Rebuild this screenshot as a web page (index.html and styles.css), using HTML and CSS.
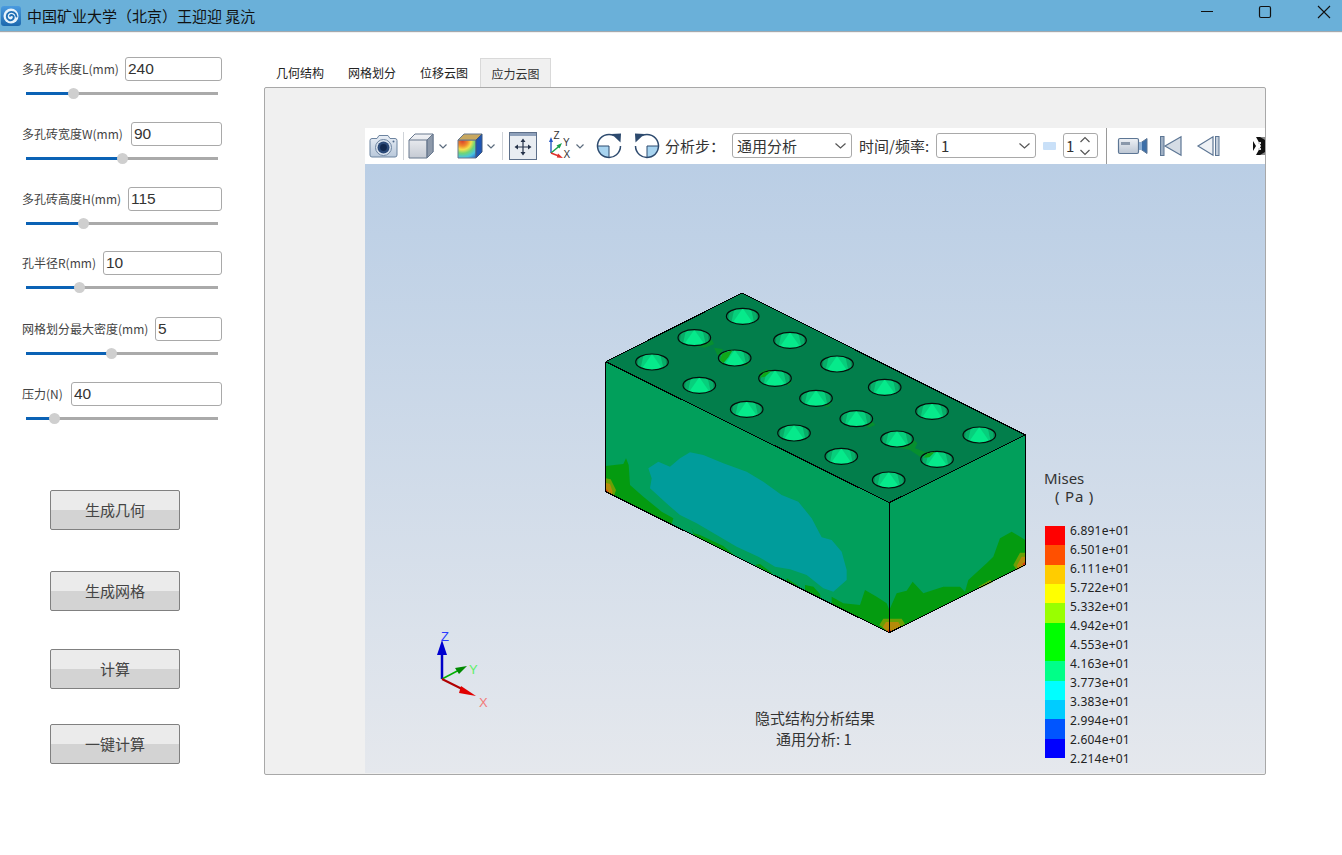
FILE: index.html
```html
<!DOCTYPE html>
<html lang="zh-CN">
<head>
<meta charset="utf-8">
<title>中国矿业大学（北京）王迎迎 晁沆</title>
<link rel="stylesheet" href="styles.css">
</head>
<body>
<div class="app">
  <header class="titlebar">
    <svg class="app-icon" viewBox="0 0 20 20" width="20" height="20">
      <defs><linearGradient id="appg" x1="0" y1="0" x2="0" y2="1"><stop offset="0" stop-color="#4a9be0"/><stop offset="1" stop-color="#1c68ae"/></linearGradient></defs>
      <rect x="0" y="0" width="20" height="20" rx="3" fill="url(#appg)"/>
      <circle cx="10" cy="10" r="7.5" fill="#e8f3fb"/>
      <path d="M15.5 10.5C15 6.5 11 5 8 6.5C5 8.2 5 12.5 8 14C10.5 15 13 13.5 12.8 11C12.5 9 10.2 8.5 9 9.8" fill="none" stroke="#1f6fb4" stroke-width="1.9" stroke-linecap="round"/>
    </svg>
    <span class="app-title">中国矿业大学（北京）王迎迎 晁沆</span>
    <div class="win-controls">
      <svg class="win-btn" viewBox="0 0 14 14" width="14" height="14"><path d="M2 6.5H14" stroke="#111" stroke-width="1" fill="none"/></svg>
      <svg class="win-btn" viewBox="0 0 14 14" width="14" height="14"><rect x="1.5" y="1.5" width="11" height="11" rx="1.5" stroke="#111" stroke-width="1.2" fill="none"/></svg>
      <svg class="win-btn" viewBox="0 0 14 14" width="14" height="14"><path d="M1 1L13 13M13 1L1 13" stroke="#111" stroke-width="1.1" fill="none"/></svg>
    </div>
  </header>

  <div class="main">
    <aside class="sidebar">
      <div class="param">
        <div class="param-head"><label class="param-label lw96">多孔砖长度L(mm)</label><input class="param-input" value="240"></div>
        <div class="slider"><div class="rail"><div class="fill" style="width:24.5%"><span class="thumb"></span></div></div></div>
      </div>
      <div class="param">
        <div class="param-head"><label class="param-label lw102">多孔砖宽度W(mm)</label><input class="param-input" value="90"></div>
        <div class="slider"><div class="rail"><div class="fill" style="width:50.5%"><span class="thumb"></span></div></div></div>
      </div>
      <div class="param param-short">
        <div class="param-head"><label class="param-label lw99">多孔砖高度H(mm)</label><input class="param-input" value="115"></div>
        <div class="slider"><div class="rail"><div class="fill" style="width:29.7%"><span class="thumb"></span></div></div></div>
      </div>
      <div class="param param-tall">
        <div class="param-head"><label class="param-label lw74">孔半径R(mm)</label><input class="param-input" value="10"></div>
        <div class="slider"><div class="rail"><div class="fill" style="width:28.1%"><span class="thumb"></span></div></div></div>
      </div>
      <div class="param">
        <div class="param-head"><label class="param-label lw126">网格划分最大密度(mm)</label><input class="param-input" value="5"></div>
        <div class="slider"><div class="rail"><div class="fill" style="width:44.3%"><span class="thumb"></span></div></div></div>
      </div>
      <div class="param">
        <div class="param-head"><label class="param-label lw42">压力(N)</label><input class="param-input" value="40"></div>
        <div class="slider"><div class="rail"><div class="fill" style="width:14.6%"><span class="thumb"></span></div></div></div>
      </div>
      <div class="actions">
        <button class="action">生成几何</button>
        <button class="action action-b">生成网格</button>
        <button class="action action-c">计算</button>
        <button class="action action-d">一键计算</button>
      </div>
    </aside>

    <section class="workspace">
      <nav class="tabs">
        <span class="tab">几何结构</span>
        <span class="tab">网格划分</span>
        <span class="tab">位移云图</span>
        <span class="tab tab-active">应力云图</span>
      </nav>
      <div class="pane">
        <div class="viewer">
          <div class="toolbar">
            <svg class="tool ml0" width="29" height="24" viewBox="0 0 29 24">
              <defs><linearGradient id="camg" x1="0" y1="0" x2="0" y2="1"><stop offset="0" stop-color="#e8eef6"/><stop offset="1" stop-color="#b9c8da"/></linearGradient></defs>
              <path d="M1 6.5Q1 4.5 3 4.5H8L10 1.5H19L21 4.5H26Q28 4.5 28 6.5V21Q28 23 26 23H3Q1 23 1 21Z" fill="url(#camg)" stroke="#6d84a0"/>
              <circle cx="14.5" cy="13.5" r="8" fill="#dbe4ef" stroke="#6d84a0"/>
              <circle cx="14.5" cy="13.5" r="6" fill="#2c4a78"/>
              <circle cx="14.5" cy="13.5" r="3.4" fill="#12284e"/>
              <circle cx="24.5" cy="7.5" r="1" fill="#4f6a8c"/>
            </svg>
            <span class="sep ml5"></span>
            <svg class="tool ml4" width="26" height="28" viewBox="0 0 26 28">
              <defs><linearGradient id="cubeg" x1="0" y1="0" x2="0" y2="1"><stop offset="0" stop-color="#f2f3f6"/><stop offset="1" stop-color="#c5cad3"/></linearGradient></defs>
              <path d="M1 8L7 2H25V20L19 26H1Z" fill="url(#cubeg)" stroke="#68788e"/>
              <path d="M19 8L25 2V20L19 26Z" fill="#8d99aa" stroke="#68788e"/>
              <path d="M1 8H19V26" fill="none" stroke="#68788e"/>
            </svg>
            <svg class="chev ml5" width="8" height="5" viewBox="0 0 8 5"><path d="M.5.5L4 4L7.5.5" fill="none" stroke="#5b6b7d" stroke-width="1.2"/></svg>
            <svg class="tool ml10" width="26" height="28" viewBox="0 0 26 28">
              <defs>
                <radialGradient id="heat" cx=".25" cy=".05" r="1.15">
                  <stop offset="0" stop-color="#d8402c"/><stop offset=".25" stop-color="#f08a2c"/><stop offset=".42" stop-color="#f4e04c"/><stop offset=".6" stop-color="#6fd678"/><stop offset=".8" stop-color="#48c4e0"/><stop offset="1" stop-color="#2d6fd0"/>
                </radialGradient>
              </defs>
              <path d="M1 8H19V26H1Z" fill="url(#heat)" stroke="#68788e"/>
              <path d="M1 8L7 2H25L19 8Z" fill="#c8a860" stroke="#68788e"/>
              <path d="M19 8L25 2V20L19 26Z" fill="#1f56b4" stroke="#40587a"/>
            </svg>
            <svg class="chev ml4" width="8" height="5" viewBox="0 0 8 5"><path d="M.5.5L4 4L7.5.5" fill="none" stroke="#5b6b7d" stroke-width="1.2"/></svg>
            <span class="sep ml7"></span>
            <svg class="tool ml6" width="28" height="28" viewBox="0 0 28 28">
              <rect x=".5" y=".5" width="27" height="27" fill="#e9edf2" stroke="#5d6f89"/>
              <rect x="1" y="1" width="26" height="3" fill="#8ea0ba"/>
              <path d="M14 8V22M7 15H21" stroke="#26334a" stroke-width="1.2"/>
              <path d="M14 6.5L11.5 10H16.5ZM14 23.5L11.5 20H16.5ZM5.5 15L9 12.5V17.5ZM22.5 15L19 12.5V17.5Z" fill="#26334a"/>
            </svg>
            <svg class="tool ml12" width="24" height="32" viewBox="0 0 24 32">
              <path d="M2 23V10" stroke="#2457c4" stroke-width="1.4"/><path d="M2 7L0 12H4Z" fill="#2457c4"/>
              <path d="M2 23L11 15.5" stroke="#18a04a" stroke-width="1.4"/><path d="M13 13L7.5 15.5L10.5 18.5Z" fill="#18a04a"/>
              <path d="M2 23L11 26.5" stroke="#e0302c" stroke-width="1.4"/><path d="M14 28L9 23.5L7.8 27.5Z" fill="#e0302c"/>
              <text class="axis-mini" x="4.5" y="9">Z</text><text class="axis-mini" x="14" y="16">Y</text><text class="axis-mini" x="14.5" y="28">X</text>
            </svg>
            <svg class="chev ml3" width="8" height="5" viewBox="0 0 8 5"><path d="M.5.5L4 4L7.5.5" fill="none" stroke="#5b6b7d" stroke-width="1.2"/></svg>
            <svg class="tool ml12" width="26" height="26" viewBox="0 0 26 26">
              <path d="M1.5 13H13V24.5A11.5 11.5 0 0 1 1.5 13Z" fill="#a8d4f0"/>
              <path d="M1.5 13H13V24.5" fill="none" stroke="#2d4a6e" stroke-width="1"/>
              <path d="M18 2.6A11.5 11.5 0 1 0 24.5 13" fill="none" stroke="#2d4a6e" stroke-width="1.5"/>
              <path d="M15.5 1L25 .5L24.5 9.5Z" fill="#2d4a6e"/>
            </svg>
            <svg class="tool ml12" width="26" height="26" viewBox="0 0 26 26">
              <path d="M13 13H24.5A11.5 11.5 0 0 1 13 24.5Z" fill="#a8d4f0"/>
              <path d="M24.5 13H13V24.5" fill="none" stroke="#2d4a6e" stroke-width="1"/>
              <path d="M8 2.6A11.5 11.5 0 1 1 1.5 13" fill="none" stroke="#2d4a6e" stroke-width="1.5"/>
              <path d="M10.5 1L1 .5L1.5 9.5Z" fill="#2d4a6e"/>
            </svg>
            <span class="tool-label ml5 w52">分析步：</span>
            <div class="combo ml15 w120"><span>通用分析</span><svg width="11" height="6" viewBox="0 0 11 6"><path d="M.5.5L5.5 5L10.5.5" fill="none" stroke="#555" stroke-width="1.2"/></svg></div>
            <span class="tool-label ml7 w70">时间/频率:</span>
            <div class="combo ml7 w100"><span>1</span><svg width="11" height="6" viewBox="0 0 11 6"><path d="M.5.5L5.5 5L10.5.5" fill="none" stroke="#555" stroke-width="1.2"/></svg></div>
            <span class="mini-slider ml7"></span>
            <div class="spin ml7"><span>1</span>
              <svg width="10" height="20" viewBox="0 0 10 20"><path d="M.5 6L5 1.5L9.5 6M.5 14L5 18.5L9.5 14" fill="none" stroke="#555" stroke-width="1.2"/></svg>
            </div>
            <span class="divider ml8"></span>
            <svg class="tool ml11" width="30" height="18" viewBox="0 0 30 18">
              <defs><linearGradient id="camc" x1="0" y1="0" x2="0" y2="1"><stop offset="0" stop-color="#eef1f5"/><stop offset="1" stop-color="#bcc6d3"/></linearGradient></defs>
              <rect x=".5" y="1.5" width="20" height="15" rx="1.5" fill="url(#camc)" stroke="#5d7694" stroke-width="1.2"/>
              <rect x="3" y="5" width="9" height="3" fill="#8a98aa"/>
              <path d="M21 7L29 1.5V16.5L21 11Z" fill="#3d6fa8" stroke="#5d7694"/>
              <rect x="21" y="5" width="3" height="8" fill="#8fb0d4"/>
            </svg>
            <svg class="tool ml12" width="22" height="20" viewBox="0 0 22 20">
              <rect x=".5" y=".5" width="3.5" height="19" fill="#9fb0c4" stroke="#5d7694"/>
              <path d="M21 .8V19.2L5 10Z" fill="#d5dce5" stroke="#5d7694" stroke-width="1.2"/>
            </svg>
            <svg class="tool ml15" width="23" height="20" viewBox="0 0 23 20">
              <path d="M16 .8V19.2L1 10Z" fill="#eef1f5" stroke="#5d7694" stroke-width="1.2"/>
              <rect x="18.5" y=".5" width="3.5" height="19" fill="#c3cedb" stroke="#5d7694"/>
            </svg>
            <svg class="tool ml33" width="12" height="18" viewBox="0 0 12 18">
              <rect width="12" height="18" fill="#111"/>
              <path d="M0 0H3L8 9L3 18H0L0 14L3 9L0 4Z" fill="#fff"/>
              <rect x="5" y="5" width="3" height="2" fill="#ddd"/><rect x="5" y="11" width="3" height="2" fill="#ddd"/>
              <path d="M7 0L12 0V3Z M7 18L12 18V15Z" fill="#888"/>
            </svg>
          </div>

          <div class="viewport">
            <svg class="scene" viewBox="365 164 900 609" width="900" height="609">
              <defs>
                <clipPath id="holeclip"><ellipse cx="0" cy="0" rx="16.3" ry="8"/></clipPath>
                <g id="hole">
                  <g clip-path="url(#holeclip)">
                    <rect x="-17" y="-9" width="34" height="18" fill="#0a8a55"/>
                    <path d="M-13-9H13L15 9H-15Z" fill="#08ad68"/>
                    <path d="M-8-9H8L12 9H-12Z" fill="#07cf7c"/>
                    <path d="M0-8L11.5 8.5H-11.5Z" fill="#06ea8b"/>
                  </g>
                  <ellipse class="hole-rim" cx="0" cy="0" rx="16.3" ry="8"/>
                </g>
              </defs>

              <polygon points="605.7,361.7 742,293 1025.3,435 889.3,502.7" fill="#027e4b"/>
              <polygon points="605.7,361.7 889.3,502.7 889.3,632.7 605.7,491.7" fill="#019f5b"/>
              <polygon points="889.3,502.7 1025.3,435 1025.3,565 889.3,632.7" fill="#019f5b"/>

              <g transform="translate(590 280) scale(.33333)" fill="#068f2f">
                <polygon points="310,197 345,203 372,192 365,178 350,190"/>
                <polygon points="372,203 398,207 392,225 382,225"/>
                <polygon points="450,255 480,248 470,258"/>
                <polygon points="505,280 530,268 540,275 515,285"/>
                <polygon points="590,310 605,305 595,318"/>
                <polygon points="700,378 725,370 715,382"/>
                <polygon points="820,432 848,425 856,435 835,443"/>
                <polygon points="915,500 960,495 970,478 982,490 975,505 1005,515 1020,515 990,530 960,510"/>
              </g>

              <use href="#hole" x="742.7" y="316.3"/><use href="#hole" x="694.3" y="337.7"/><use href="#hole" x="652" y="362"/>
              <use href="#hole" x="790" y="340.3"/><use href="#hole" x="734.7" y="358"/><use href="#hole" x="699.3" y="385.3"/>
              <use href="#hole" x="837" y="364"/><use href="#hole" x="775" y="378.3"/><use href="#hole" x="746.7" y="409.3"/>
              <use href="#hole" x="884.7" y="387.3"/><use href="#hole" x="816" y="398.3"/><use href="#hole" x="794" y="433"/>
              <use href="#hole" x="932" y="411.3"/><use href="#hole" x="856.3" y="418.7"/><use href="#hole" x="841.3" y="456.3"/>
              <use href="#hole" x="897" y="439"/><use href="#hole" x="979.3" y="435"/><use href="#hole" x="937" y="459.3"/>
              <use href="#hole" x="888.7" y="480"/>

              <g transform="translate(590 280) scale(.33333)" fill="#10a81a">
                <polygon points="389,240 398,220 428,211 415,232 400,250"/>
                <polygon points="510,293 520,278 545,272 525,290"/>
                <polygon points="1000,533 1012,520 1035,515 1018,532"/>
              </g>

              <g transform="translate(590 440) scale(.33333)">
                <polygon fill="#009c9b" points="175,85 205,65 240,80 270,55 300,37 340,45 400,70 470,95 520,125 575,165 625,185 665,235 695,292 725,300 755,335 770,390 770,420 730,455 700,445 650,405 600,388 555,380 505,350 440,320 380,285 320,250 270,225 235,195 180,145 185,115"/>
                <g fill="#049b10">
                  <polygon points="47,78 100,72 108,55 116,75 120,135 160,170 215,215 250,235 245,253 47,155"/>
                  <polygon points="305,265 312,280 330,285 400,318 435,347 312,287"/>
                  <polygon points="495,375 510,372 545,398 545,402"/>
                  <polygon points="590,415 625,438 625,442 590,425"/>
                  <polygon points="645,435 670,440 690,462 692,475 645,452"/>
                  <polygon points="725,470 760,490 810,495 825,450 860,470 890,490 898,510 898,578 725,492"/>
                  <polygon points="898,510 920,460 950,452 968,425 1000,460 1060,440 1110,440 1125,455 1135,420 1190,370 1210,350 1230,295 1265,275 1306,300 1306,375 898,578"/>
                </g>
                <g fill="#6aa004">
                  <polygon points="47,115 62,118 78,150 72,168 47,155"/>
                  <polygon points="868,555 880,536 935,536 945,552 898,578"/>
                  <polygon points="1270,375 1290,338 1306,338 1306,375 1280,390"/>
                  <polygon points="1165,440 1200,420 1210,425 1170,445"/>
                </g>
                <g fill="#b58a0a">
                  <polygon points="47,128 60,132 68,155 65,165 47,155"/>
                  <polygon points="878,562 888,546 925,546 932,558 898,578"/>
                  <polygon points="1280,378 1295,350 1306,350 1306,375 1285,387"/>
                </g>
                <g fill="#d4400a">
                  <polygon points="47,146 54,152 54,159 47,155"/>
                  <polygon points="890,574 898,566 906,574 898,578"/>
                  <polygon points="1297,372 1306,365 1306,375 1300,378"/>
                </g>
              </g>

              <g class="edges">
                <polyline points="605.7,361.7 742,293 1025.3,435 889.3,502.7 605.7,361.7"/>
                <polyline points="605.7,361.7 605.7,491.7 889.3,632.7 1025.3,565 1025.3,435"/>
                <line x1="889.3" y1="502.7" x2="889.3" y2="632.7"/>
              </g>

              <g class="triad">
                <line x1="442" y1="679" x2="442" y2="650" stroke="#0000c8" stroke-width="2.5"/>
                <polygon points="442,640 437,655 447,655" fill="#0000d0"/>
                <line x1="442" y1="679" x2="461" y2="669" stroke="#00b000" stroke-width="1.5"/>
                <polygon points="467,666 455,668 459,674" fill="#008a00"/>
                <line x1="442" y1="679" x2="462" y2="689" stroke="#b00000" stroke-width="2"/>
                <polygon points="476,696 461,686 459,693" fill="#e00000"/>
                <text class="axis-z" x="441" y="641">Z</text>
                <text class="axis-y" x="469" y="674">Y</text>
                <text class="axis-x" x="479" y="707">X</text>
              </g>

              <g class="legend">
                <text class="legend-title" x="1044" y="484">Mises</text>
                <text class="legend-title legend-unit" x="1055" y="502">( Pa )</text>
                <rect x="1045" y="526" width="20" height="19" fill="#ff0000"/>
                <rect x="1045" y="545" width="20" height="20" fill="#ff5000"/>
                <rect x="1045" y="565" width="20" height="19" fill="#ffcc00"/>
                <rect x="1045" y="584" width="20" height="19" fill="#ffff00"/>
                <rect x="1045" y="603" width="20" height="20" fill="#99ff00"/>
                <rect x="1045" y="623" width="20" height="38" fill="#00ff00"/>
                <rect x="1045" y="661" width="20" height="20" fill="#00ff88"/>
                <rect x="1045" y="681" width="20" height="19" fill="#00ffff"/>
                <rect x="1045" y="700" width="20" height="19" fill="#00ccff"/>
                <rect x="1045" y="719" width="20" height="20" fill="#0055ff"/>
                <rect x="1045" y="739" width="20" height="19" fill="#0000ff"/>
                <text class="legend-value" x="1070" y="535">6.891e+01</text>
                <text class="legend-value" x="1070" y="554">6.501e+01</text>
                <text class="legend-value" x="1070" y="573">6.111e+01</text>
                <text class="legend-value" x="1070" y="592">5.722e+01</text>
                <text class="legend-value" x="1070" y="611">5.332e+01</text>
                <text class="legend-value" x="1070" y="630">4.942e+01</text>
                <text class="legend-value" x="1070" y="649">4.553e+01</text>
                <text class="legend-value" x="1070" y="668">4.163e+01</text>
                <text class="legend-value" x="1070" y="687">3.773e+01</text>
                <text class="legend-value" x="1070" y="706">3.383e+01</text>
                <text class="legend-value" x="1070" y="725">2.994e+01</text>
                <text class="legend-value" x="1070" y="744">2.604e+01</text>
                <text class="legend-value" x="1070" y="763">2.214e+01</text>
              </g>

              <text class="caption" x="815" y="724">隐式结构分析结果</text>
              <text class="caption" x="814" y="745">通用分析: 1</text>
            </svg>
          </div>
        </div>
      </div>
    </section>
  </div>
</div>
</body>
</html>
```
FILE: styles.css
```css
* { box-sizing: border-box; }
html, body { margin: 0; padding: 0; background: #fff; }
body { font-family: "Noto Sans CJK SC", "Noto Sans", sans-serif; color: #333; overflow: hidden; }

.app { width: 1342px; height: 855px; display: flex; flex-direction: column; overflow: hidden; }

/* Title bar */
.titlebar { height: 32px; flex: none; display: flex; align-items: center; background: #6ab0d9; border-bottom: 1px solid #a3a9ae; padding-left: 1px; box-shadow: 0 1px 0 #f0f0f0; }
.app-icon { flex: none; }
.app-title { margin-left: 6px; font-size: 15px; line-height: 20px; color: #111; white-space: pre; }
.win-controls { margin-left: auto; align-self: flex-start; display: flex; align-items: center; gap: 45px; padding: 5px 11px 0 0; }
.win-btn { display: block; }

/* Layout */
.main { flex: 1; display: flex; min-height: 0; }
.sidebar { width: 264px; flex: none; padding: 25px 42px 0 22px; }
.workspace { flex: none; width: 1002px; display: flex; flex-direction: column; padding-top: 26px; }

/* Parameters */
.param { height: 65px; }
.param-short { height: 64px; }
.param-tall { height: 66px; }
.param-head { display: flex; align-items: center; gap: 7px; height: 24px; }
.param-label { flex: none; font-size: 12px; line-height: 16px; color: #444; white-space: nowrap; }
.lw96 { width: 96px; } .lw102 { width: 102px; } .lw99 { width: 99px; }
.lw74 { width: 74px; } .lw126 { width: 126px; } .lw42 { width: 42px; }
.param-input { flex: 1; min-width: 0; height: 24px; border: 1px solid #a9a9a9; border-radius: 3px; padding: 0 0 0 2px; font-family: "Liberation Sans", sans-serif; font-size: 15.5px; color: #333; background: #fff; outline: none; }
.slider { display: flex; align-items: center; height: 11px; margin: 7px 4px 0; }
.rail { flex: 1; height: 3px; background: #aaaaaa; position: relative; }
.fill { height: 100%; background: #0b62b5; position: relative; }
.thumb { position: absolute; right: -5.5px; top: -4px; width: 11px; height: 11px; border-radius: 50%; background: #cfcfcf; }

/* Buttons */
.actions { display: flex; flex-direction: column; align-items: flex-start; padding: 43px 0 0 28px; }
.action { width: 130px; height: 40px; padding: 0 0 1px; border: 1px solid #808080; border-radius: 2px; background: linear-gradient(to bottom, #ebebeb 0, #ebebeb 50%, #d3d3d3 50%, #d3d3d3 100%); font-family: inherit; font-size: 15px; color: #444; }
.action-b { margin-top: 41px; }
.action-c { margin-top: 38px; }
.action-d { margin-top: 35px; }

/* Tabs */
.tabs { display: flex; height: 29px; flex: none; }
.tab { width: 72px; display: flex; align-items: center; justify-content: center; font-size: 12px; color: #222; }
.tab-active { width: 71px; background: #f0f0f0; border: 1px solid #d9d9d9; border-bottom: 0; color: #333; }
.pane { height: 688px; flex: none; background: #f0f0f0; border: 1px solid #a8a8a8; border-radius: 2px; padding: 40px 0 1px 100px; }

/* Viewer */
.viewer { height: 100%; display: flex; flex-direction: column; overflow: hidden; }
.toolbar { height: 36px; flex: none; background: #fff; display: flex; align-items: center; padding-left: 4px; white-space: nowrap; }
.tool, .chev { flex: none; display: block; overflow: visible; }
.sep { flex: none; width: 1px; height: 28px; background: #cfd3d8; }
.divider { flex: none; width: 1px; height: 36px; background: #9a9a9a; }
.tool-label { flex: none; font-size: 15px; line-height: 20px; color: #333; }
.combo { flex: none; height: 25px; margin-bottom: 1px; border: 1px solid #a9a9a9; border-radius: 3px; display: flex; align-items: center; justify-content: space-between; padding: 0 5px 0 4px; font-size: 15px; color: #333; background: #fff; }
.mini-slider { flex: none; width: 13px; height: 8px; background: #c9e0f8; border-radius: 1px; }
.spin { flex: none; width: 35px; height: 25px; margin-bottom: 1px; border: 1px solid #a9a9a9; border-radius: 3px; display: flex; align-items: center; justify-content: space-between; padding: 0 7px 0 2px; font-size: 15px; color: #333; }
.axis-mini { font-family: "Liberation Sans", sans-serif; font-size: 10px; fill: #333; }

.ml0 { margin-left: 0; } .ml3 { margin-left: 3px; } .ml4 { margin-left: 4px; } .ml5 { margin-left: 5px; }
.ml6 { margin-left: 6px; } .ml7 { margin-left: 7px; } .ml8 { margin-left: 8px; } .ml10 { margin-left: 10px; }
.ml11 { margin-left: 11px; } .ml12 { margin-left: 12px; } .ml15 { margin-left: 15px; } .ml33 { margin-left: 33px; }
.w52 { width: 52px; } .w70 { width: 70px; } .w100 { width: 100px; } .w120 { width: 120px; }

.viewport { flex: 1; min-height: 0; background: linear-gradient(to bottom, #bacee5 0%, #e5e8ed 100%); }
.scene { display: block; }
.hole-rim { fill: none; stroke: #04100b; stroke-width: 1.2; }
.edges polyline, .edges line { fill: none; stroke: #000; stroke-width: 1.1; shape-rendering: crispEdges; }
.axis-z, .axis-y, .axis-x { font-family: "Liberation Sans", sans-serif; font-size: 13px; }
.axis-z { fill: #2a3cff; }
.axis-y { fill: #5ff06a; }
.axis-x { fill: #f27a7a; }
.legend-title { font-family: "Noto Sans", sans-serif; font-size: 15px; fill: #333; }
.legend-unit { letter-spacing: .8px; }
.legend-value { font-family: "Noto Sans", sans-serif; font-size: 12px; letter-spacing: .2px; fill: #222; }
.caption { font-family: "Noto Sans CJK SC", sans-serif; font-size: 15px; fill: #333; text-anchor: middle; }
```
